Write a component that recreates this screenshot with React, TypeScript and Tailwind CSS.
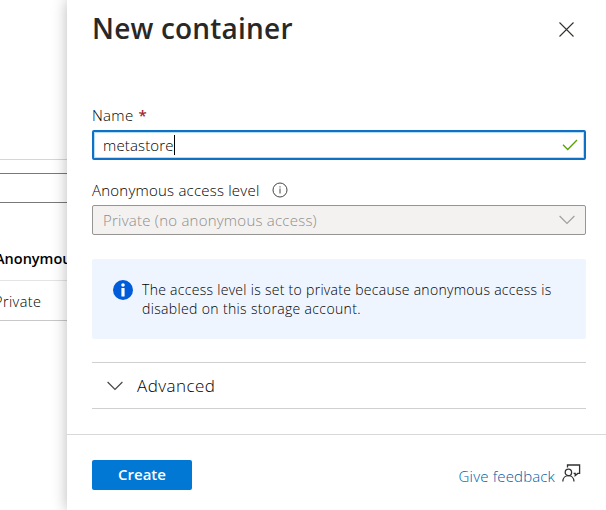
import type { ReactNode } from "react";

function CloseIcon() {
  return (
    <svg width="16" height="16" viewBox="0 0 16 16" fill="none" stroke="#323130" strokeWidth="1.1">
      <path d="M0.5 0.5 L14.5 14.5 M14.5 0.5 L0.5 14.5" />
    </svg>
  );
}

function Chevron({ color }: { color: string }) {
  return (
    <svg width="16" height="10" viewBox="0 0 16 10" fill="none" stroke={color} strokeWidth="1.2">
      <path d="M0.6 1 L8 8.5 L15.4 1" />
    </svg>
  );
}

function CheckIcon() {
  return (
    <svg width="16" height="12" viewBox="0 0 16 12" fill="none" stroke="#57a300" strokeWidth="1.3">
      <path d="M1 5.8 L5.7 10.5 L15 1" />
    </svg>
  );
}

function InfoOutline() {
  return (
    <svg width="16" height="16" viewBox="0 0 16 16" fill="none" stroke="#484644" strokeWidth="1">
      <circle cx="8" cy="8" r="7" />
      <path d="M8 6.5 V11.5 M8 4.3 V5.5" />
    </svg>
  );
}

function InfoFilled() {
  return (
    <svg width="20" height="20" viewBox="0 0 20 20">
      <circle cx="10" cy="10" r="10" fill="#015cda" />
      <circle cx="10" cy="5" r="1.8" fill="#fff" />
      <rect x="8.4" y="8" width="3.2" height="8.6" rx="0.6" fill="#fff" />
    </svg>
  );
}

function FeedbackIcon() {
  return (
    <svg width="19" height="18" viewBox="0 0 19 18" fill="none" stroke="#323130" strokeWidth="1.3">
      <path d="M5.5 3.6 V1 H17.6 V9.4 H15.8 L13.2 11.6 V9.4 H11.6" />
      <circle cx="6.4" cy="8.4" r="3.2" />
      <path d="M0.8 17.6 C0.8 9.6 12 9.6 12 17.6" />
    </svg>
  );
}

function Line({ className, children }: { className: string; children: ReactNode }) {
  return <span className={`block whitespace-nowrap ${className}`}>{children}</span>;
}

function BackgroundPage() {
  return (
    <div className="h-[510px] w-[67px] shrink-0 overflow-hidden bg-white pt-[159px]">
      <div className="h-px bg-[#d6d6d6]" />
      <div className="mt-[13px] h-[30px] border-y border-[#7a7876]" />
      <div className="flex h-[77px] items-end pb-[11px]">
        <Line className="-ml-[5px] text-[14.5px] leading-5 font-semibold">Anonymous access level</Line>
      </div>
      <div className="flex h-[41px] items-center border-t border-b border-t-[#e4e4e4] border-b-[#c8c8c8] pt-[2px]">
        <Line className="-ml-[6px] text-[14.5px] leading-5 font-light tracking-[0.4px]">Private</Line>
      </div>
    </div>
  );
}

export default function App() {
  return (
    <div className="flex h-[510px] w-[606px] overflow-hidden bg-white font-['Open_Sans','Noto_Sans',sans-serif] text-black">
      <BackgroundPage />
      <section className="relative flex w-[539px] shrink-0 flex-col bg-white shadow-[0_0_14px_rgba(0,0,0,0.28)]">
        <header className="flex h-[107px] items-start justify-between pr-[31px] pl-[25px]">
          <h1 className="pt-[8px]">
            <Line className="text-[28px] leading-10 font-semibold tracking-[0.2px] text-[#292827]">New container</Line>
          </h1>
          <button className="mt-[22px]" aria-label="Close"><CloseIcon /></button>
        </header>

        <div className="flex h-[327px] flex-col pr-[20px] pl-[25px]">
          <div className="flex h-[23px] gap-[5px] text-[15px] leading-[17px]">
            <Line className="font-light tracking-[0.3px]">Name</Line>
            <Line className="font-semibold text-[#a4262c]">*</Line>
          </div>
          <div className="flex h-[30px] items-center justify-between rounded-[2px] border-2 border-[#0f70c4] pr-[6px] pl-[9px] shadow-[inset_0_0_0_1px_#b5ddf8]">
            <div className="flex items-center">
              <Line className="text-[15px] leading-5 font-light tracking-[0.15px]">metastore</Line>
              <span className="h-[20px] w-px bg-black" />
            </div>
            <CheckIcon />
          </div>

          <div className="mt-[22px] flex h-[23px] gap-[12px] text-[15px] leading-[17px]">
            <Line className="font-light tracking-[0.22px]">Anonymous access level</Line>
            <InfoOutline />
          </div>
          <div className="flex h-[30px] items-center justify-between rounded-[2px] border border-[#979593] bg-[#f3f2f1] pr-[10px] pl-[10px] text-[#8f8d8b]">
            <Line className="text-[15px] leading-5 font-light tracking-[0.23px]">Private (no anonymous access)</Line>
            <Chevron color="#a19f9d" />
          </div>

          <div className="mt-[24px] flex h-[80px] rounded-[2px] bg-[#eff5ff] pt-[21px] pl-[21px]">
            <InfoFilled />
            <div className="ml-[9px] text-[14px] leading-[19px] font-light">
              <Line className="tracking-[0.29px]">The access level is set to private because anonymous access is</Line>
              <Line className="tracking-[0.35px]">disabled on this storage account.</Line>
            </div>
          </div>

          <div className="mt-[23px] flex h-[47px] items-center border-y border-[#d2d0ce] pl-[15px]">
            <Chevron color="#484644" />
            <Line className="ml-[14px] text-[17px] leading-6 font-light tracking-[0.45px]">Advanced</Line>
          </div>
        </div>

        <footer className="flex h-[76px] items-start justify-between border-t border-[#d8d8d8] pt-[25px] pr-[25px] pl-[25px]">
          <button className="flex h-[30px] w-[100px] items-center justify-center rounded-[2px] bg-[#0078d4] pb-[2px] text-white">
            <Line className="text-[15px] leading-5 font-semibold">Create</Line>
          </button>
          <a className="flex gap-[7px] pt-[4px] text-[#005ba8]">
            <Line className="text-[15px] leading-6 font-light tracking-[0.15px]">Give feedback</Line>
            <FeedbackIcon />
          </a>
        </footer>
      </section>
    </div>
  );
}
